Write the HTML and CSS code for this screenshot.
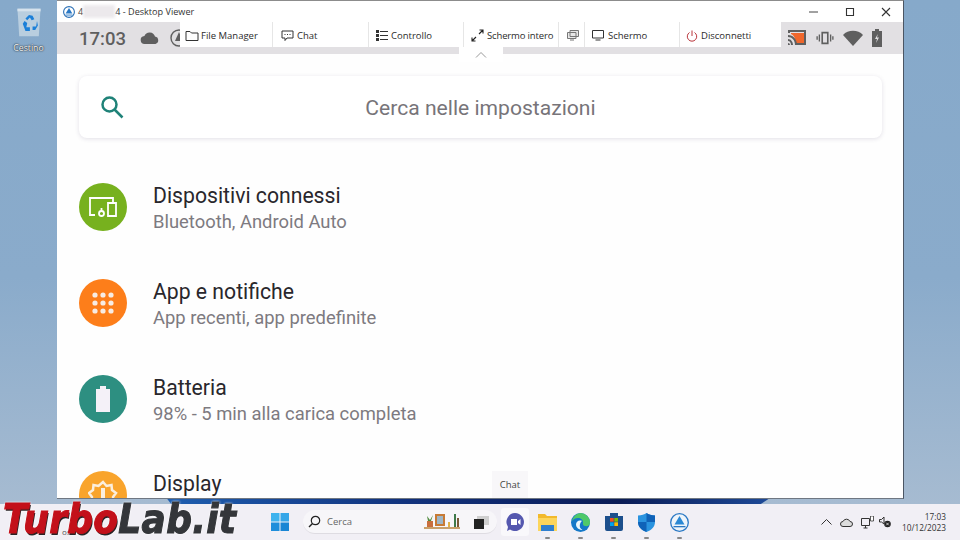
FILE: index.html
```html
<!DOCTYPE html>
<html lang="it">
<head>
    <meta charset="UTF-8">
    <title>Desktop Viewer</title>
    <link rel="stylesheet" href="styles.css">
</head>
<body>
    <div class="desktop">
        <div class="band"></div>

        <div class="desk-icon">
            <svg width="28" height="32" viewBox="0 0 30 36">
                <path d="M2 3h26l-2 31H4z" fill="#b9cedf"/>
                <path d="M2 3h26v3H2z" fill="#d6e2ec"/>
                <path d="M15 10l4 1 2 4-3 1-2-3-3 3-2-2zM8 20l2-3 3 2-1 5h4v4H11zM24 17l1 5-3 5h-3v-4h4z" fill="#1b7fd8"/>
            </svg>
            <span class="desk-label">Cestino</span>
        </div>

        <div class="window">
            <div class="titlebar">
                <svg class="app-logo" width="12" height="12" viewBox="0 0 12 12">
                    <circle cx="6" cy="6" r="5.4" fill="#fff" stroke="#2a6fb5" stroke-width="1.1"/>
                    <path d="M6 2l3.4 5.6H2.6z" fill="#2a78c4"/>
                    <path d="M2.4 8.6h7.2v.9H2.4z" fill="#2a78c4"/>
                </svg>
                <span class="title">4<span class="blurred"></span>4 - Desktop Viewer</span>
                <div class="win-btns">
                    <svg width="12" height="12" viewBox="0 0 12 12"><path d="M1 6h9" stroke="#444" fill="none"/></svg>
                    <svg width="12" height="12" viewBox="0 0 12 12"><path d="M2.5 2.5h7v7h-7z" stroke="#333" stroke-width="1.1" fill="none"/></svg>
                    <svg width="12" height="12" viewBox="0 0 12 12"><path d="M2 2l8 8M10 2l-8 8" stroke="#333" stroke-width="1.1" fill="none"/></svg>
                </div>
            </div>

            <div class="statusbar">
                <span class="clock">17:03</span>
                <svg width="20" height="14" viewBox="0 0 20 14"><path d="M5 13a4 4 0 0 1-.6-8A5.6 5.6 0 0 1 15 5.6 3.800 3.800 0 0 1 15.500 13z" fill="#5f5f5f"/></svg>
                <svg class="status-app" width="16" height="18" viewBox="0 0 16 18"><circle cx="9" cy="9" r="8" fill="#e0dfe1" stroke="#5f5f5f" stroke-width="1.400"/><path d="M9 3l4 9H5z" fill="#5f5f5f"/></svg>
                <div class="status-right">
                    <svg width="20" height="18" viewBox="0 0 20 18">
                        <path d="M1 4V1h18v15H9v-2h8V3H3v1z" fill="#5f5f5f"/>
                        <path d="M4 4h13v10H9C8 9 7 6 4 5z" fill="#f0672c"/>
                        <path d="M1 6c5 0 9 4 9 10H8c0-5-3-8-7-8zM1 10c3 0 5 3 5 6H4c0-2-1-4-3-4zM1 14a2 2 0 0 1 2 2H1z" fill="#5f5f5f"/>
                    </svg>
                    <svg width="18" height="16" viewBox="0 0 20 16">
                        <path d="M6 1h8v14H6zM7.800 3v10h4.400V3z" fill="#5f5f5f" fill-rule="evenodd"/>
                        <path d="M3 4h1.500v8H3zM15.500 4H17v8h-1.500zM0.500 6H2v4H.5zM18 6h1.500v4H18z" fill="#5f5f5f"/>
                    </svg>
                    <svg width="20" height="16" viewBox="0 0 20 16"><path d="M0 5C5-.6 15-.6 20 5l-10 11z" fill="#5f5f5f"/></svg>
                    <svg width="10" height="18" viewBox="0 0 10 18"><path d="M3 0h4v2h3v16H0V2h3z" fill="#5f5f5f"/><path d="M5.800 5L3 10h2l-1 4 3-5.500H5z" fill="#e0dfe1"/></svg>
                </div>

                <div class="toolbar">
                    <div class="tool tool-files">
                        <svg width="14" height="12" viewBox="0 0 14 12"><path d="M1 10.500V1.500h4l1.500 1.500h6.500v7.500z" fill="none" stroke="#333"/></svg>
                        File Manager
                    </div>
                    <div class="tool tool-chat">
                        <svg width="13" height="12" viewBox="0 0 13 12"><path d="M1 1h11v7H6l-2 2.500V8H1z" fill="none" stroke="#333"/><path d="M3.500 4.500h1M6 4.500h1M8.500 4.500h1" stroke="#333"/></svg>
                        Chat
                    </div>
                    <div class="tool tool-control">
                        <svg width="12" height="11" viewBox="0 0 12 11"><path d="M0 0h3v3H0zM0 4h3v3H0zM0 8h3v3H0z" fill="#333"/><path d="M4 1.500h8M4 5.500h8M4 9.500h8" stroke="#333"/></svg>
                        Controllo
                    </div>
                    <div class="tool tool-full">
                        <svg width="13" height="13" viewBox="0 0 13 13"><path d="M1 12l4-4M8 5l4-4M8.500 1H12v3.500M1 8.500V12h3.500" fill="none" stroke="#222" stroke-width="1.100"/></svg>
                        Schermo intero
                    </div>
                    <div class="tool tool-multi">
                        <svg width="12" height="11" viewBox="0 0 12 11"><path d="M3 .5h8.500v6H3zM.5 2.500H9v6H.5z" fill="#e8e8e8" stroke="#777"/><path d="M3 10h4" stroke="#777"/></svg>
                    </div>
                    <div class="tool tool-screen">
                        <svg width="12" height="11" viewBox="0 0 12 11"><path d="M.5.5h11v7.500H.5zM3.500 10h5" fill="none" stroke="#333"/></svg>
                        Schermo
                    </div>
                    <div class="tool tool-off">
                        <svg width="12" height="12" viewBox="0 0 12 12"><path d="M3.500 2.500a4.700 4.700 0 1 0 5 0M6 .5V6" fill="none" stroke="#b9343a"/></svg>
                        Disconnetti
                    </div>
                </div>
                <div class="collapse">
                    <svg width="12" height="6" viewBox="0 0 12 6"><path d="M1 5.500l5-5 5 5" fill="none" stroke="#999"/></svg>
                </div>
            </div>

            <div class="settings">
                <div class="searchcard">
                    <svg class="search-ico" width="26" height="26" viewBox="0 0 26 26"><circle cx="10.500" cy="10.500" r="7" fill="none" stroke="#1f8278" stroke-width="2.500"/><path d="M15.500 15.500l8 8" stroke="#1f8278" stroke-width="2.500"/></svg>
                    <span class="search-text">Cerca nelle impostazioni</span>
                </div>

                <div class="row">
                    <div class="circle green">
                        <svg width="30" height="24" viewBox="0 0 30 24" fill="none" stroke="#fff" stroke-width="1.800">
                            <path d="M7 20H2V3h23v4"/>
                            <circle cx="13.500" cy="18.500" r="2.500"/>
                            <path d="M13.500 13v3"/>
                            <path d="M20 8h8v13h-8z"/>
                        </svg>
                    </div>
                    <div class="row-text">
                        <div class="row-title">Dispositivi connessi</div>
                        <div class="row-sub">Bluetooth, Android Auto</div>
                    </div>
                </div>

                <div class="row">
                    <div class="circle orange">
                        <svg width="24" height="24" viewBox="0 0 24 24" fill="#f7ece4">
                            <circle cx="4" cy="4" r="2.600"/><circle cx="12" cy="4" r="2.600"/><circle cx="20" cy="4" r="2.600"/>
                            <circle cx="4" cy="12" r="2.600"/><circle cx="12" cy="12" r="2.600"/><circle cx="20" cy="12" r="2.600"/>
                            <circle cx="4" cy="20" r="2.600"/><circle cx="12" cy="20" r="2.600"/><circle cx="20" cy="20" r="2.600"/>
                        </svg>
                    </div>
                    <div class="row-text">
                        <div class="row-title">App e notifiche</div>
                        <div class="row-sub">App recenti, app predefinite</div>
                    </div>
                </div>

                <div class="row">
                    <div class="circle teal">
                        <svg width="14" height="26" viewBox="0 0 14 26"><path d="M4 0h6v3h4v23H0V3h4z" fill="#f4f1f8"/></svg>
                    </div>
                    <div class="row-text">
                        <div class="row-title">Batteria</div>
                        <div class="row-sub">98% - 5 min alla carica completa</div>
                    </div>
                </div>

                <div class="row">
                    <div class="circle amber">
                        <svg width="30" height="30" viewBox="0 0 30 30">
                            <path d="M15 2l3.500 4 5-1 .5 5 4 3-3 4 1 5-5 .5-3 4-3-2.500-4 2.500-3-4-5-.5 1-5-3-4 4-3 .5-5 5 1z" fill="none" stroke="#fbeedd" stroke-width="2.500"/>
                            <path d="M13 8h4v14h-4z" fill="#fbeedd"/>
                        </svg>
                    </div>
                    <div class="row-text">
                        <div class="row-title">Display</div>
                    </div>
                </div>
            </div>

            <div class="tip">Chat</div>
        </div>
    </div>

    <div class="taskbar">
        <span class="weather">osc</span>
        <div class="brand"><span class="brand-red">Turbo</span><span class="brand-dark">Lab.it</span></div>

        <svg class="start" width="18" height="18" viewBox="0 0 18 18">
            <path d="M0 0h8.500v8.500H0z" fill="#3fb3ee"/><path d="M9.500 0H18v8.500H9.500z" fill="#35a6e8"/>
            <path d="M0 9.500h8.500V18H0z" fill="#1f8edb"/><path d="M9.500 9.500H18V18H9.500z" fill="#1a86d4"/>
        </svg>

        <div class="searchbox">
            <svg width="13" height="13" viewBox="0 0 13 13"><circle cx="7.500" cy="5.500" r="4.200" fill="none" stroke="#222" stroke-width="1.200"/><path d="M4.500 8.500L1 12" stroke="#222" stroke-width="1.400"/></svg>
            <span class="search-label">Cerca</span>
            <svg class="shelf" width="36" height="17" viewBox="0 0 36 17">
                <path d="M0 14h36v2H0z" fill="#c9a06a"/>
                <path d="M3 8h6v6H3z" fill="#c96f3e"/><path d="M3 3l3 4 3-5-2 6H4z" fill="#4f8a3c"/>
                <path d="M11 1h10v12H11z" fill="#c77a35"/><path d="M13 3h6v8h-6z" fill="#9fb6c6"/>
                <path d="M24 9h2v5h-2z" fill="#e0b24a"/><path d="M30 1h2v13h-2z" fill="#3f7a4a"/><path d="M33 5h2v9h-2z" fill="#7a5a38"/>
            </svg>
        </div>

        <div class="apps">
            <div class="app">
                <svg width="15" height="13" viewBox="0 0 15 13"><path d="M3 0h12v9H3z" fill="#cfcfcf"/><path d="M0 3h10v10H0z" fill="#222"/></svg>
            </div>
            <div class="app app-on">
                <svg width="18" height="18" viewBox="0 0 18 18"><path d="M9 0a9 9 0 1 1-5 16.500L1 18l1-4A9 9 0 0 1 9 0z" fill="#5558af"/><path d="M5 6h6v6H5zM12 8l2.500-2v6L12 10z" fill="#fff"/></svg>
            </div>
            <div class="app app-open">
                <svg width="19" height="17" viewBox="0 0 19 17"><path d="M0 0h7l2 2h10v15H0z" fill="#f2b92c"/><path d="M0 4h19v13H0z" fill="#fcd55c"/><path d="M3 11h13v6H3z" fill="#2f7fd0"/></svg>
            </div>
            <div class="app app-open">
                <svg width="19" height="19" viewBox="0 0 19 19">
                    <circle cx="9.500" cy="9.500" r="9.500" fill="#1478c8"/>
                    <path d="M10 0a9.500 9.500 0 0 1 9 10c0 2.500-2.500 3.500-5 3-1.500-.3-2.500-1.500-2-3 .4-3-2-5-5-5-2.500 0-4.500 1-6 3C2 4 5.500 0 10 0z" fill="#4ec86a"/>
                    <path d="M11 8c-3-1.500-6 .5-6 3.500S8 17 11.500 17c-2-1-3-3-2.700-5 .2-1.500 1-3 2.200-4z" fill="#eaf6fb"/>
                </svg>
            </div>
            <div class="app app-open">
                <svg width="18" height="18" viewBox="0 0 18 18">
                    <path d="M5 3V0h8v3h5v13a2 2 0 0 1-2 2H2a2 2 0 0 1-2-2V3z" fill="#1c4f8c"/>
                    <path d="M5 5h3.700v3.700H5z" fill="#f25022"/><path d="M9.300 5H13v3.700H9.300z" fill="#7fba00"/>
                    <path d="M5 9.300h3.700V13H5z" fill="#00a4ef"/><path d="M9.300 9.300H13V13H9.300z" fill="#ffb900"/>
                </svg>
            </div>
            <div class="app app-open">
                <svg width="17" height="19" viewBox="0 0 17 19"><path d="M8.500 0c2 1.500 5 2.500 8.500 2.500V9c0 5-4 8.500-8.500 10C4 17.500 0 14 0 9V2.500C3.500 2.500 6.500 1.500 8.500 0z" fill="#2a93df"/><path d="M8.500 0c2 1.500 5 2.500 8.500 2.500V9H8.500zM0 9h8.500v10C4 17.500 0 14 0 9z" fill="#0f62b8"/></svg>
            </div>
            <div class="app app-open">
                <svg width="19" height="19" viewBox="0 0 19 19">
                    <circle cx="9.500" cy="9.500" r="8.800" fill="#eef4fa" stroke="#2a78c4" stroke-width="1.300"/>
                    <path d="M9.500 3l5 8.500h-10z" fill="#2a88d4"/><path d="M3.500 13h12v1.300h-12z" fill="#2a78c4"/>
                </svg>
            </div>
        </div>

        <div class="tray">
            <svg width="11" height="6" viewBox="0 0 11 6"><path d="M.5 5.500l5-5 5 5" fill="none" stroke="#333"/></svg>
            <svg width="13" height="9" viewBox="0 0 13 9"><path d="M3 8.500a2.500 2.500 0 0 1 0-5 3.800 3.800 0 0 1 7 0 2.500 2.500 0 0 1 0 5z" fill="#ddd" stroke="#333"/></svg>
            <svg width="13" height="13" viewBox="0 0 13 13"><path d="M.5 2.500h8v7h-8zM2.500 12h4M4.500 9.500V12" fill="none" stroke="#333"/><path d="M9.500 0H12.500v5H9.500z" fill="#fff" stroke="#333" stroke-width=".8"/></svg>
            <svg class="tray-sound" width="12" height="12" viewBox="0 0 12 12"><path d="M.5 3.500h2L5 1v7L2.500 6h-2z" fill="none" stroke="#333"/><circle cx="8.500" cy="8" r="3.300" fill="#222"/><path d="M7.200 6.700l2.600 2.600M9.800 6.700L7.200 9.300" stroke="#fff" stroke-width=".7"/></svg>
            <div class="datetime">
                <span>17:03</span>
                <span>10/12/2023</span>
            </div>
        </div>
    </div>
</body>
</html>
```

FILE: styles.css
```css
* {
    margin: 0;
    padding: 0;
    box-sizing: border-box;
}

body {
    width: 960px;
    height: 540px;
    overflow: hidden;
    display: flex;
    flex-direction: column;
    font-family: 'Open Sans', 'Noto Sans', sans-serif;
}

.desktop {
    position: relative;
    height: 504px;
    background: linear-gradient(180deg, #86a9ca 0%, #8aabcb 55%, #a6bbd1 100%);
}

.band {
    position: absolute;
    left: 165px;
    bottom: 0;
    width: 608px;
    height: 8px;
    background: linear-gradient(90deg, #1f5fb0 0%, #0f2f7c 40%, #0b1c56 75%, #1e4b99 100%);
    clip-path: polygon(0 0, 100% 0, 98% 100%, 1% 100%);
}

.desk-icon {
    position: absolute;
    left: 0;
    top: 6px;
    width: 57px;
    display: flex;
    flex-direction: column;
    align-items: center;
    gap: 4px;
}

.desk-label {
    font-size: 8.700px;
    color: #f4f6f8;
    text-shadow: 0 0 2px #222, 0 0 1px #222;
}

.window {
    position: absolute;
    left: 57px;
    top: 0;
    width: 847px;
    height: 499px;
    background: #fff;
    border-top: 1px solid #8c8c8c;
    border-right: 1px solid #4b5563;
    border-bottom: 1px solid #6f7782;
    display: flex;
    flex-direction: column;
    overflow: hidden;
}

.titlebar {
    height: 21px;
    flex: none;
    display: flex;
    align-items: center;
    padding-left: 6px;
    background: #fff;
}

.app-logo {
    margin-right: 3px;
}

.title {
    font-size: 9.100px;
    color: #333;
    display: flex;
    align-items: center;
    white-space: pre;
}

.blurred {
    width: 32px;
    height: 13px;
    background: #ece9ec;
    filter: blur(1.500px);
}

.win-btns {
    margin-left: auto;
    display: flex;
    gap: 24px;
    padding-right: 11px;
}

.statusbar {
    position: relative;
    height: 32px;
    flex: none;
    background: #e2e0e3;
    display: flex;
    align-items: center;
    padding: 0 21px 0 22px;
    color: #5f5f5f;
}

.clock {
    font-family: Roboto, sans-serif;
    font-size: 18.500px;
    font-weight: 500;
    margin-right: 14px;
    margin-top: 1px;
}

.status-app {
    margin-left: 10px;
}

.status-right {
    margin-left: auto;
    display: flex;
    align-items: center;
    gap: 9px;
}

.toolbar {
    position: absolute;
    left: 123px;
    top: 0;
    width: 601px;
    height: 25px;
    background: #fff;
    display: flex;
    font-size: 9.500px;
    color: #2b2b2b;
}

.tool {
    display: flex;
    align-items: center;
    gap: 4px;
    padding-left: 5px;
    padding-top: 2px;
    border-right: 1px solid #e6e6e6;
    white-space: nowrap;
}

.tool-files { width: 93px; gap: 2px; }
.tool-chat { width: 96px; padding-left: 8px; gap: 3px; }
.tool-control { width: 95px; padding-left: 7px; gap: 3px; }
.tool-full { width: 95px; padding-left: 7px; gap: 3px; letter-spacing: -0.15px; }
.tool-multi { width: 26px; padding-left: 8px; }
.tool-screen { width: 95px; padding-left: 7px; }
.tool-off { width: 101px; padding-left: 6px; gap: 3px; border-right: none; }

.collapse {
    position: absolute;
    left: 402px;
    top: 25px;
    width: 44px;
    height: 15px;
    background: #fff;
    display: flex;
    justify-content: center;
    padding-top: 5px;
    z-index: 1;
}

.collapse svg {
    display: block;
}

.settings {
    flex: 1;
    min-height: 0;
    padding: 22px 21px 0 22px;
    background: #fefefe;
}

.searchcard {
    position: relative;
    height: 62px;
    width: 803px;
    background: #fff;
    border-radius: 8px;
    box-shadow: 0 1px 4px rgba(80, 70, 110, 0.16);
    display: flex;
    align-items: center;
    justify-content: center;
    margin-bottom: 21px;
}

.search-ico {
    position: absolute;
    left: 20px;
    top: 18px;
}

.search-text {
    font-family: Roboto, sans-serif;
    font-size: 21.100px;
    color: #777479;
}

.row {
    height: 96px;
    display: flex;
    align-items: center;
    gap: 26px;
}

.circle {
    width: 48px;
    height: 48px;
    flex: none;
    border-radius: 50%;
    display: flex;
    align-items: center;
    justify-content: center;
}

.green { background: #77b11e; }
.orange { background: #fd7e1a; }
.teal { background: #2d8f81; }
.amber { background: #f9a42c; }

.row-text {
    min-height: 58px;
    padding-top: 4px;
}

.row-title {
    font-family: Roboto, sans-serif;
    font-size: 21.200px;
    line-height: 27px;
    color: #29272c;
}

.row-sub {
    font-family: Roboto, sans-serif;
    font-size: 18.400px;
    line-height: 26px;
    color: #7d7a80;
}

.tip {
    position: absolute;
    left: 435px;
    top: 470px;
    width: 36px;
    height: 27px;
    background: #f8f7f9;
    font-size: 9.500px;
    color: #444;
    display: flex;
    align-items: center;
    justify-content: center;
}

.taskbar {
    position: relative;
    height: 36px;
    flex: none;
    background: #f1eff5;
    display: flex;
    align-items: center;
}

.weather {
    position: absolute;
    left: 62px;
    top: 22px;
    font-size: 8px;
    color: #555;
}

/* logo is stretched, no installed font is this tall and heavy */
.brand {
    position: absolute;
    left: 3px;
    top: -2px;
    font-family: 'DejaVu Sans', sans-serif;
    font-size: 36px;
    font-weight: bold;
    font-style: italic;
    line-height: 36px;
    letter-spacing: 0.300px;
    white-space: nowrap;
    transform: scaleY(1.120);
    filter: drop-shadow(0 0 1px #fff);
}

.brand-red {
    color: #c3101a;
    -webkit-text-stroke: 1px #c3101a;
    text-shadow: 1px 1px 0 #2a2326;
}

.brand-dark {
    color: #34363a;
    -webkit-text-stroke: 1px #34363a;
}

.start {
    margin-left: 271px;
    flex: none;
}

.searchbox {
    width: 194px;
    height: 24px;
    margin-left: 14px;
    flex: none;
    background: #f7f6f9;
    border-radius: 12px;
    border-bottom: 1px solid #dedce2;
    display: flex;
    align-items: center;
    padding-left: 5px;
    gap: 6px;
}

.search-label {
    font-size: 9.500px;
    color: #666;
}

.shelf {
    margin-left: auto;
    margin-right: 37px;
}

.apps {
    position: absolute;
    left: 465px;
    top: 0;
    display: flex;
}

.app {
    position: relative;
    width: 33px;
    height: 36px;
    display: flex;
    align-items: center;
    justify-content: center;
}

.app-on::before {
    content: '';
    position: absolute;
    left: 3px;
    top: 4px;
    width: 28px;
    height: 28px;
    background: #f9f8fb;
    border-radius: 3px;
}

.app-on svg {
    position: relative;
}

.app-open::after {
    content: '';
    position: absolute;
    left: 14px;
    bottom: 1px;
    width: 5px;
    height: 2px;
    background: #888;
    border-radius: 1px;
}

.tray {
    position: absolute;
    right: 14px;
    top: 0;
    height: 36px;
    display: flex;
    align-items: center;
    gap: 8px;
}

.tray-sound {
    margin-left: -3px;
}

.datetime {
    display: flex;
    flex-direction: column;
    align-items: flex-end;
    margin-left: 3px;
    font-size: 8.300px;
    line-height: 11px;
    color: #333;
}
```
